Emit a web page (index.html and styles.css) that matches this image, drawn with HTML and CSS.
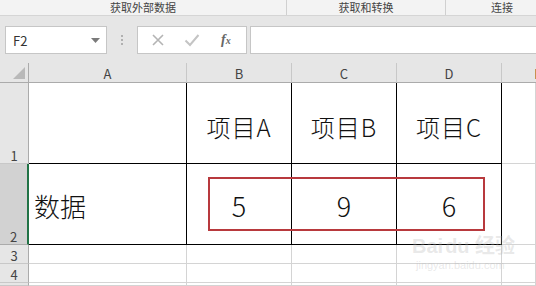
FILE: index.html
```html
<!DOCTYPE html>
<html lang="zh-CN">
<head>
<meta charset="utf-8">
<title>Excel</title>
<link rel="stylesheet" href="styles.css">
</head>
<body>
<div class="ribbon">
  <div class="grp g1">获取外部数据</div>
  <div class="grp g2">获取和转换</div>
  <div class="grp g3">连接</div>
</div>
<div class="fbar">
  <div class="namebox">
    <span class="ref">F2</span>
    <svg class="dd" width="9" height="5" viewBox="0 0 9 5"><path d="M0 0H9L4.5 5Z" fill="#7a7a7a"/></svg>
  </div>
  <div class="dots"><i></i><i></i><i></i></div>
  <div class="fbtns">
    <svg class="ic" width="14" height="14" viewBox="0 0 14 14"><path d="M2 2L12 12M12 2L2 12" stroke="#b4b4b4" stroke-width="1.6" fill="none"/></svg>
    <svg class="ic" width="16" height="14" viewBox="0 0 16 14"><path d="M1.5 7.5L6 12L14.5 2" stroke="#c4c4c4" stroke-width="2" fill="none"/></svg>
    <span class="fx">f<sub>x</sub></span>
  </div>
  <div class="finput"></div>
</div>
<div class="sheet">
  <div class="corner"><span class="tri"></span></div>
  <div class="ch">A</div>
  <div class="ch">B</div>
  <div class="ch">C</div>
  <div class="ch">D</div>
  <div class="ch che"><span class="esliver"></span></div>

  <div class="rh">1</div>
  <div class="c bk"></div>
  <div class="c bk hd">项目A</div>
  <div class="c bk hd">项目B</div>
  <div class="c bk hd">项目C</div>
  <div class="c"></div>

  <div class="rh sel">2</div>
  <div class="c bk lbl">数据</div>
  <div class="c bk num">5</div>
  <div class="c bk num">9</div>
  <div class="c bk num">6</div>
  <div class="c"></div>

  <div class="rh">3</div>
  <div class="c"></div><div class="c"></div><div class="c"></div><div class="c"></div><div class="c"></div>

  <div class="rh">4</div>
  <div class="c"></div><div class="c"></div><div class="c"></div><div class="c"></div><div class="c"></div>

  <div class="rh"></div>
  <div class="c"></div><div class="c"></div><div class="c"></div><div class="c"></div><div class="c"></div>

  <div class="hilite"></div>
  <div class="wm">
    <div class="wm1">Bai<span class="paw">du</span> 经验</div>
    <div class="wm2">jingyan.baidu.com</div>
  </div>
</div>
</body>
</html>
```

FILE: styles.css
```css
* { box-sizing: border-box; }
html, body { margin: 0; padding: 0; }
body {
  width: 536px;
  height: 286px;
  overflow: hidden;
  background: #e6e6e6;
  font-family: "Noto Sans CJK SC", "Noto Sans", sans-serif;
  color: #444;
}
.ribbon {
  display: flex;
  height: 16px;
  background: #f3f3f3;
  border-bottom: 1px solid #d5d5d5;
  white-space: nowrap;
  overflow: hidden;
}
.grp {
  flex: none;
  font-size: 11px;
  line-height: 14px;
  height: 15px;
  text-align: center;
  color: #444;
  border-right: 1px solid #d0d0d0;
}
.g1 { width: 287px; }
.g2 { width: 159px; }
.g3 { flex: 1; min-width: 0; padding-left: 22px; border-right: 0; }

.fbar {
  display: flex;
  align-items: flex-start;
  height: 47px;
  padding-top: 10px;
}
.namebox {
  margin-left: 5px;
  width: 102px;
  height: 28px;
  background: #fff;
  border: 1px solid #c6c6c6;
  display: flex;
  align-items: center;
  justify-content: space-between;
  padding: 0 6px 0 7px;
}
.ref { font-size: 13px; color: #333; }
.dd { margin-top: 1px; }
.dots {
  width: 30px;
  height: 28px;
  display: flex;
  flex-direction: column;
  align-items: center;
  justify-content: center;
  gap: 2px;
}
.dots i { display: block; width: 2px; height: 2px; background: #b0b0b0; }
.fbtns {
  width: 110px;
  height: 28px;
  background: #fff;
  border: 1px solid #c6c6c6;
  display: flex;
  align-items: center;
  padding-left: 13px;
  gap: 19px;
}
.fx {
  font-family: "Liberation Serif", serif;
  font-style: italic;
  font-weight: 700;
  font-size: 14px;
  color: #666;
  margin-left: 2px;
}
.fx sub { font-size: 10px; vertical-align: 0; }
.finput {
  margin-left: 3px;
  flex: 1;
  height: 28px;
  background: #fff;
  border: 1px solid #c6c6c6;
  border-right: 0;
}

.sheet {
  position: relative;
  display: grid;
  grid-template-columns: 29px 158px 105px 105px 105px 1fr;
  grid-template-rows: 20px 81px 81px 19px 19px 1fr;
  height: 223px;
  background: #fff;
}
.corner {
  background: #e6e6e6;
  border-right: 1px solid #ababab;
  border-bottom: 1px solid #ababab;
  position: relative;
}
.tri {
  position: absolute;
  right: 3px;
  bottom: 3px;
  width: 0;
  height: 0;
  border-left: 12px solid transparent;
  border-bottom: 12px solid #b9b9b9;
}
.ch {
  background: #e6e6e6;
  border-right: 1px solid #c8c8c8;
  border-bottom: 1px solid #ababab;
  font-size: 13px;
  line-height: 19px;
  text-align: center;
  color: #444;
  padding-top: 1px;
}
.che {
  border-right: 0;
  display: flex;
  justify-content: flex-end;
  align-items: center;
}
.esliver {
  display: block;
  width: 1px;
  height: 10px;
  background: #c89050;
  margin-top: 2px;
}
.rh {
  background: #e6e6e6;
  border-right: 1px solid #ababab;
  border-bottom: 1px solid #c8c8c8;
  font-size: 13px;
  line-height: 15px;
  text-align: center;
  display: flex;
  align-items: flex-end;
  justify-content: center;
  color: #444;
}
.rh.sel {
  background: #d2d2d2;
  border-right: 2px solid #217346;
  border-bottom-color: #ababab;
}
.c {
  border-right: 1px solid #d4d4d4;
  border-bottom: 1px solid #d4d4d4;
  display: flex;
  align-items: center;
  justify-content: center;
  color: #111;
}
.c.bk { border-right-color: #000; border-bottom-color: #000; }
.hd {
  font-size: 24px;
  font-weight: 300;
  padding-top: 7px;
  letter-spacing: 1px;
}
.lbl {
  justify-content: flex-start;
  padding-left: 5px;
  font-size: 26px;
  font-weight: 300;
  padding-top: 3px;
}
.num {
  font-size: 27px;
  font-weight: 300;
  padding-top: 3px;
}
.hilite {
  position: absolute;
  left: 208px;
  top: 114px;
  width: 277px;
  height: 54px;
  border: 2px solid #b8393d;
  pointer-events: none;
}
.wm {
  position: absolute;
  left: 412px;
  top: 172px;
  color: rgba(180, 180, 180, 0.3);
  font-family: "Liberation Sans", "Noto Sans CJK SC", sans-serif;
  pointer-events: none;
  white-space: nowrap;
}
.wm1 { font-size: 20px; font-weight: 700; line-height: 22px; }
.wm2 { font-size: 11px; line-height: 13px; margin-left: 4px; margin-top: 2px; }
.paw { margin-left: 2px; }
```
